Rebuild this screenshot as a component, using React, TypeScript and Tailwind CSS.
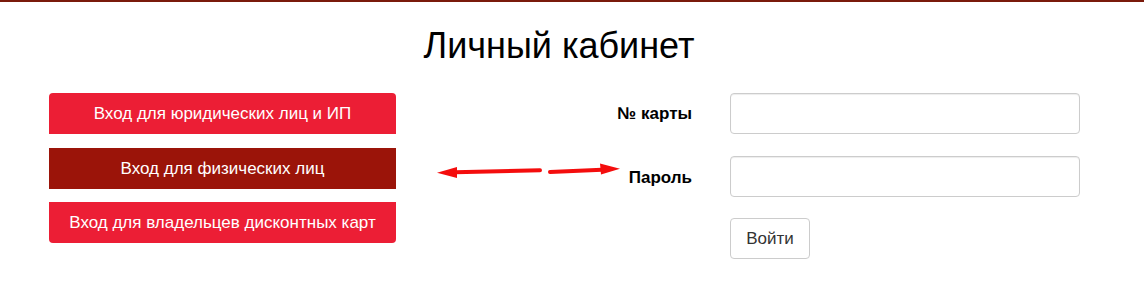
export default function App() {
  return (
    <div className="relative min-h-[299px] bg-white border-t-2 border-[#7a1a0b] font-['Liberation_Sans',Arial,sans-serif] text-[#333]">
      <h1 className="pt-6 pr-[26px] text-center text-[36px] leading-[40px] font-normal text-black">Личный кабинет</h1>

      <div className="mt-[27px] flex">
        <div className="ml-[49px] flex w-[347px] flex-col">
          <button className="h-[41px] rounded-t-[4px] bg-[#ec1e35] text-[17px] text-white">
            Вход для юридических лиц и ИП
          </button>
          <button className="mt-[14px] h-[41px] bg-[#9b1409] text-[17px] text-white">
            Вход для физических лиц
          </button>
          <button className="mt-[13px] h-[41px] rounded-b-[4px] bg-[#ec1e35] text-[17px] text-white">
            Вход для владельцев дисконтных карт
          </button>
        </div>

        <div className="flex flex-col">
          <div className="flex items-center">
            <label className="w-[296px] text-right text-[17px] font-bold text-black">№ карты</label>
            <input className="ml-[38px] h-[41px] w-[350px] rounded-[4px] border border-[#ccc] shadow-[inset_0_1px_1px_rgba(0,0,0,0.075)] outline-none" />
          </div>
          <div className="mt-[22px] flex items-center">
            <label className="w-[296px] pt-[2px] text-right text-[17px] font-bold text-black">Пароль</label>
            <input type="password" className="ml-[38px] h-[41px] w-[350px] rounded-[4px] border border-[#ccc] shadow-[inset_0_1px_1px_rgba(0,0,0,0.075)] outline-none" />
          </div>
          <div className="mt-[21px] flex">
            <button className="ml-[334px] h-[41px] w-[80px] rounded-[4px] border border-[#ccc] bg-white text-[17px] text-[#333]">
              Войти
            </button>
          </div>
        </div>
      </div>

      {/* annotation arrows drawn over the page */}
      <svg className="pointer-events-none absolute left-0 top-0" width="1144" height="299" viewBox="0 0 1144 299">
        <line x1="455" y1="170.3" x2="540" y2="168.3" stroke="#f40d0d" strokeWidth="4" strokeLinecap="round" />
        <polygon points="437,170.7 457,165 457,176" fill="#f40d0d" />
        <line x1="550" y1="170" x2="602" y2="167.8" stroke="#f40d0d" strokeWidth="4" strokeLinecap="round" />
        <polygon points="620,166.7 600,161.5 601,172.5" fill="#f40d0d" />
      </svg>
    </div>
  )
}
